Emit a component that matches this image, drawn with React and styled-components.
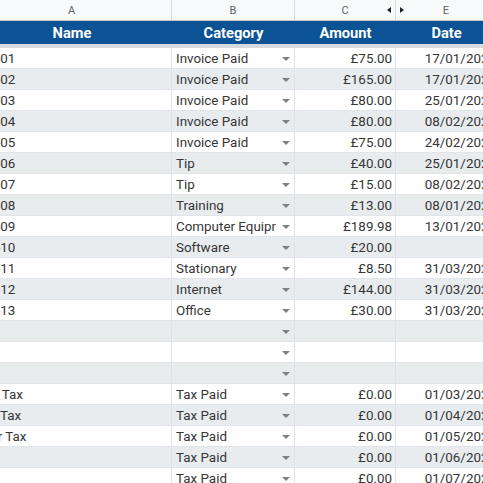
import React from 'react'
import styled, { createGlobalStyle } from 'styled-components'

const GlobalStyle = createGlobalStyle`
body {
    margin: 0;
    background: #fff;
    font-family: Roboto, 'Liberation Sans', sans-serif;
}
`

const COLS = '200px 123px 101px 101px'

const Viewport = styled.div`
width: 483px;
height: 483px;
overflow: hidden;
position: relative;
`

// the sheet is scrolled a little to the right, so column A starts off-screen
const Sheet = styled.div`
margin-left: -28px;
width: 540px;
`

const LetterRow = styled.div`
display: grid;
grid-template-columns: ${COLS};
height: 20px;
background: #f8f9fa;
border-bottom: 1px solid #c4c7c5;
`

const Letter = styled.div`
position: relative;
display: flex;
align-items: center;
justify-content: center;
font-size: 11px;
color: #5f6368;
border-right: 1px solid #dadce0;
`

const Hidden = styled.span`
position: absolute;
top: 7px;
${props => props.$side === 'left' ? 'right: 4px;' : 'left: 4px;'}
width: 0;
height: 0;
border-top: 3.5px solid transparent;
border-bottom: 3.5px solid transparent;
${props => props.$side === 'left'
    ? 'border-right: 4px solid #202124;'
    : 'border-left: 4px solid #202124;'}
`

const HeadRow = styled.div`
display: grid;
grid-template-columns: ${COLS};
height: 23px;
background: #0b5394;
border-bottom: 4px solid #d7dbe0;
`

const HeadCell = styled.div`
display: flex;
align-items: center;
justify-content: center;
color: #fff;
font-weight: 700;
font-size: 14.67px;
`

const Row = styled.div`
display: grid;
grid-template-columns: ${COLS};
height: 20px;
background: ${props => props.$alt ? '#e8ecef' : '#fff'};
border-bottom: 1px solid #e1e4e8;
`

const Cell = styled.div`
display: flex;
align-items: center;
min-width: 0;
overflow: hidden;
padding: 0 ${props => props.$pr ?? 3}px 0 ${props => props.$pl ?? 3}px;
font-size: 13.4px;
color: #363636;
white-space: pre;
justify-content: ${props => props.$right ? 'flex-end' : 'flex-start'};
border-right: 1px solid #dfe2e5;
`

const CatText = styled.span`
flex: 1;
overflow: hidden;
white-space: nowrap;
`

const Caret = styled.span`
flex: none;
width: 0;
height: 0;
margin: 1px 4px 0 6px;
border-left: 4px solid transparent;
border-right: 4px solid transparent;
border-top: 4px solid #7b8085;
`

const rows = [
  ['INV-01', 'Invoice Paid', '£75.00', '17/01/2024'],
  ['INV-02', 'Invoice Paid', '£165.00', '17/01/2024'],
  ['INV-03', 'Invoice Paid', '£80.00', '25/01/2024'],
  ['INV-04', 'Invoice Paid', '£80.00', '08/02/2024'],
  ['INV-05', 'Invoice Paid', '£75.00', '24/02/2024'],
  ['INV-06', 'Tip', '£40.00', '25/01/2024'],
  ['INV-07', 'Tip', '£15.00', '08/02/2024'],
  ['INV-08', 'Training', '£13.00', '08/01/2024'],
  ['INV-09', 'Computer Equipment', '£189.98', '13/01/2024'],
  ['INV-10', 'Software', '£20.00', ''],
  ['INV-11', 'Stationary', '£8.50', '31/03/2024'],
  ['INV-12', 'Internet', '£144.00', '31/03/2024'],
  ['INV-13', 'Office', '£30.00', '31/03/2024'],
  ['', '', '', ''],
  ['', '', '', ''],
  ['', '', '', ''],
  ['VAT Tax', 'Tax Paid', '£0.00', '01/03/2024'],
  ['NIC Tax', 'Tax Paid', '£0.00', '01/04/2024'],
  ['User Tax', 'Tax Paid', '£0.00', '01/05/2024'],
  ['', 'Tax Paid', '£0.00', '01/06/2024'],
  ['', 'Tax Paid', '£0.00', '01/07/2024'],
]

const App = () => {
  return (
    <Viewport>
      <GlobalStyle />
      <Sheet>
        <LetterRow>
          <Letter>A</Letter>
          <Letter>B</Letter>
          <Letter>C<Hidden $side="left" /></Letter>
          <Letter>E<Hidden $side="right" /></Letter>
        </LetterRow>
        <HeadRow>
          <HeadCell>Name</HeadCell>
          <HeadCell>Category</HeadCell>
          <HeadCell>Amount</HeadCell>
          <HeadCell>Date</HeadCell>
        </HeadRow>
        {rows.map((r, i) => (
          <Row key={i} $alt={i % 2 === 1}>
            <Cell>{r[0]}</Cell>
            <Cell $pl={4} $pr={0}>
              <CatText>{r[1]}</CatText>
              <Caret />
            </Cell>
            <Cell $right>{r[2]}</Cell>
            <Cell $right $pr={0}>{r[3]}</Cell>
          </Row>
        ))}
      </Sheet>
    </Viewport>
  )
}

export default App
